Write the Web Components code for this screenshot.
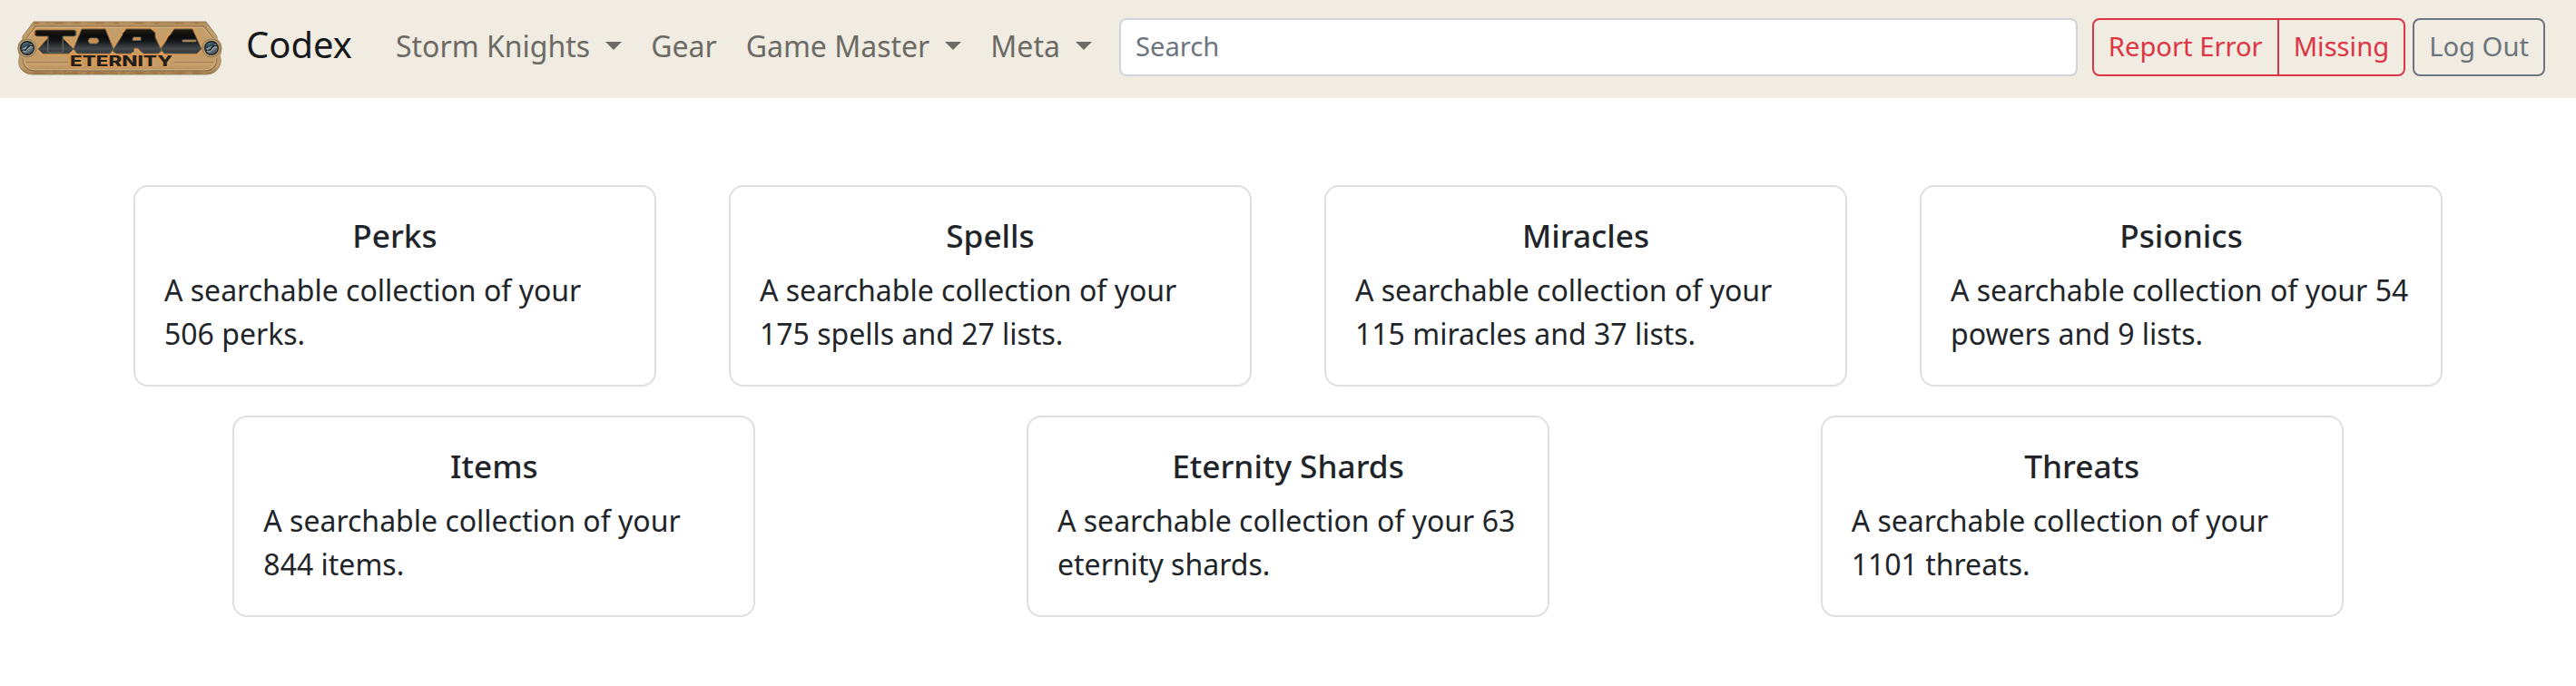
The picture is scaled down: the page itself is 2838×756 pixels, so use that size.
<!DOCTYPE html>
<html lang="en">
<head>
<meta charset="utf-8">
<title>Torg Eternity Codex</title>
<style>
html{font-size:32px}
body{margin:0;background:#fff;color:#212529;font:400 32px/1.5 "Noto Sans","Liberation Sans",sans-serif}
</style>
</head>
<body>
<codex-app></codex-app>
<script>
class BaseElement extends HTMLElement {
  constructor() {
    super();
    this.attachShadow({ mode: 'open' }).innerHTML = '<style>*{box-sizing:border-box}</style>' + this.render();
  }
}

customElements.define('torg-logo', class extends BaseElement {
  render() {
    const letter = (x, size, width, ch) => `<text x="${x}" y="34" font-size="${size}" textLength="${width}" lengthAdjust="spacingAndGlyphs">${ch}</text>`;
    const letters = letter(41, 32, 45, 'T') + letter(83, 28, 30, 'O') + letter(131, 28, 34, 'R') + letter(179, 28, 32, 'G');
    const plates = 'M22 31L32 20H50L61 31L56 36H27ZM70 9H96L105 31L101 36H65L61 31ZM119 9H146L151 13V18L158 33L154 36H138L134 30H128L124 36H108L104 33ZM172 9H192L202 31L197 36H161L157 31Z';
    return `<style>:host{display:block;width:224px;height:60px;flex:none;margin-top:1px}svg{display:block;overflow:visible}</style>
<svg width="224" height="60" viewBox="0 0 224 60" role="img" aria-label="Torg Eternity">
<defs>
<linearGradient id="wood" x2="0" y2="1"><stop offset="0" stop-color="#a98656"/><stop offset=".12" stop-color="#c39f6c"/><stop offset=".85" stop-color="#c39c68"/><stop offset="1" stop-color="#987345"/></linearGradient>
<linearGradient id="steel" gradientUnits="userSpaceOnUse" x1="0" y1="9" x2="0" y2="36"><stop offset="0" stop-color="#251b0c"/><stop offset=".3" stop-color="#090b0b"/><stop offset=".5" stop-color="#15181a"/><stop offset=".8" stop-color="#45484a"/><stop offset="1" stop-color="#33383a"/></linearGradient>
<linearGradient id="orb" x2=".5" y2="1"><stop offset="0" stop-color="#6f98ac"/><stop offset=".45" stop-color="#2c4450"/><stop offset=".5" stop-color="#8c9da6"/><stop offset="1" stop-color="#46545b"/></linearGradient>
<filter id="glow" x="-10%" y="-30%" width="120%" height="160%"><feGaussianBlur stdDeviation=".8"/></filter>
<filter id="grain" x="0" y="0" width="100%" height="100%"><feTurbulence type="fractalNoise" baseFrequency=".13 .2" numOctaves="3" seed="4"/><feColorMatrix values="0 0 0 0 .52  0 0 0 0 .33  0 0 0 0 .14  3 0 0 0 -1.2"/><feComposite in2="SourceGraphic" operator="in"/></filter>
</defs>
<path d="M17 1H207L219 17V20Q224 24 224 30Q224 35 222 38Q226 48 217 56Q213 59 207 59H16Q8 59 3 53Q-1 47 2 38Q0 35 0 30Q0 24 5 20V17Z" fill="url(#wood)" stroke="#94805d" stroke-width="1"/>
<path d="M17 1H207L219 17V20Q224 24 224 30Q224 35 222 38Q226 48 217 56Q213 59 207 59H16Q8 59 3 53Q-1 47 2 38Q0 35 0 30Q0 24 5 20V17Z" filter="url(#grain)" opacity=".5"/>
<path d="M9 19L19 6H205L215 19M5 41Q5 54 17 55H207Q219 54 219 41" fill="none" stroke="#806746" stroke-width="1"/>
<path d="M10 20L20 7.2H204L214 20M6 42Q7 52 17 53.8H207Q217 52 218 42" fill="none" stroke="#dcc59a" stroke-width=".7"/>
<path d="M18 2.500H203M16 57.5H207" stroke="#a46c38" stroke-width="1.6" stroke-dasharray="5 18 9 12" opacity=".7"/>
<path d="M9 46H55M172 46H216" stroke="#8c6d48"/><path d="M9 47H55M172 47H216" stroke="#dbba88" stroke-width=".7"/>
<g font-family="Inter,Liberation Sans,sans-serif" font-weight="900" stroke-linejoin="bevel">
<g text-anchor="middle">
<g fill="none" stroke="#ed994c" stroke-width="4" opacity=".85" filter="url(#glow)"><path d="${plates}"/>${letter(41, 32, 45, 'T')}</g>
<path d="${plates}" fill="url(#steel)" stroke="#5f6255"/>
<g fill="none" stroke="#62665a" stroke-width="2.4">${letter(41, 32, 45, 'T')}</g>
<g fill="url(#steel)" stroke="url(#steel)" stroke-width="1">${letters}</g>
<path d="M79 19H87L89 22L87 25H79L77 22ZM127 18H135V21.500H126ZM181 21H196V23H181Z" fill="#c8914f" stroke="#74705d" stroke-width=".8"/>
</g>
<text x="57" y="50" font-size="15.5" font-weight="800" textLength="113" lengthAdjust="spacingAndGlyphs" fill="#1c211f" stroke="#eb9444" stroke-opacity=".75" stroke-width="2.6" paint-order="stroke">ETERNITY</text>
</g>
<g id="bolts"><circle cx="10" cy="30" r="10" fill="#b89869" stroke="#8c7957"/><circle cx="10" cy="30" r="7.3" fill="url(#orb)" stroke="#1c2325" stroke-width="1.4"/><path d="M4 32Q8 34 10 30T16 28" fill="none" stroke="#10191d" stroke-width="1.6"/><path d="M5 33Q9 35 11 31T16 29" fill="none" stroke="#b9c8cc" stroke-width=".8"/></g>
<use href="#bolts" x="203"/>
</svg>`;
  }
});

customElements.define('nav-link', class extends BaseElement {
  render() {
    return `<style>:host{display:flex;align-items:center;padding:0 16px;height:64px;line-height:48px;color:#6c6a65;white-space:nowrap}
i{display:none;border:9.6px solid transparent;border-top-color:currentColor;border-bottom:0}
:host([menu]) i{display:block;margin-left:17px}</style><slot></slot><i></i>`;
  }
});

customElements.define('search-box', class extends BaseElement {
  render() {
    return `<style>:host{display:block;flex:1;height:64px;border:2px solid #ced4da;border-radius:8px;background:#fff;padding:7px 16px;color:#6c757d;font-size:29.2px;line-height:44px}</style><slot></slot>`;
  }
});

customElements.define('action-button', class extends BaseElement {
  render() {
    return `<style>:host{display:block;height:64px;border:2px solid currentColor;border-radius:8px;padding:7px 16px;color:#6c757d;font-size:29.2px;line-height:44px;white-space:nowrap}
:host([danger]){color:#dc3545}
:host([joined=start]){border-radius:8px 0 0 8px}
:host([joined=end]){border-radius:0 8px 8px 0;margin-left:-2px}</style><slot></slot>`;
  }
});

customElements.define('top-bar', class extends BaseElement {
  render() {
    return `<style>:host{display:flex;height:108px;background:#f0ece1;padding:0 34px 4px 20px;align-items:center}
.brand{display:flex;align-items:center;color:#17191a;font-size:40px;line-height:60px;gap:27px;margin-right:32px}
.brand span{margin-bottom:6px}
nav{display:flex;margin:-3px 14px 0 0}
.group{display:flex;margin:0 8px 0 16px}</style>
<div class="brand"><torg-logo></torg-logo><span>Codex</span></div>
<nav><nav-link menu>Storm Knights</nav-link><nav-link>Gear</nav-link><nav-link menu>Game Master</nav-link><nav-link menu>Meta</nav-link></nav>
<search-box>Search</search-box>
<div class="group"><action-button danger joined="start">Report Error</action-button><action-button danger joined="end">Missing</action-button></div>
<action-button>Log Out</action-button>`;
  }
});

customElements.define('info-card', class extends BaseElement {
  render() {
    return `<style>:host{display:block;box-sizing:border-box;width:576px;height:222.24px;border:2px solid #dfdfdf;border-radius:16px;padding:32px;background:#fff}
h5{margin:0 0 16px;font-size:35.2px;font-weight:500;line-height:42.24px;text-align:center}
p{margin:0}</style><h5><slot name="title"></slot></h5><p><slot></slot></p>`;
  }
});

customElements.define('card-row', class extends BaseElement {
  render() {
    return `<style>:host{display:flex;justify-content:space-around;margin-bottom:32px}</style><slot></slot>`;
  }
});

customElements.define('codex-app', class extends BaseElement {
  render() {
    const card = (t, d) => `<info-card><span slot="title">${t}</span>A searchable collection of your ${d}</info-card>`;
    return `<style>:host{display:block}main{width:2624px;margin:96px auto 0}</style>
<top-bar></top-bar>
<main>
<card-row>${card('Perks', '506 perks.')}${card('Spells', '175 spells and 27 lists.')}${card('Miracles', '115 miracles and 37 lists.')}${card('Psionics', '54 powers and 9 lists.')}</card-row>
<card-row>${card('Items', '844 items.')}${card('Eternity Shards', '63 eternity shards.')}${card('Threats', '1101 threats.')}</card-row>
</main>`;
  }
});
</script>
</body>
</html>
